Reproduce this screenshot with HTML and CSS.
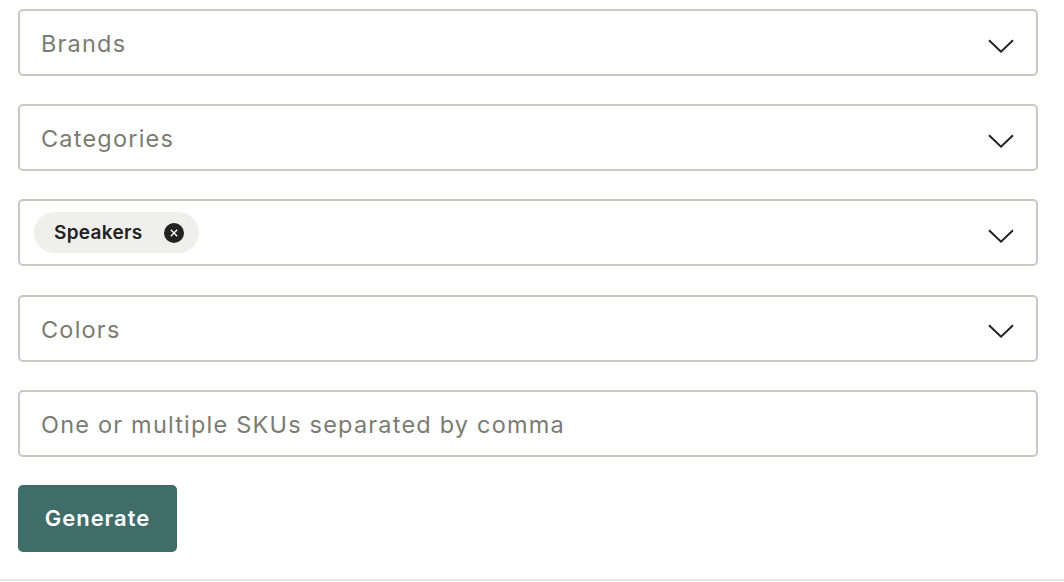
FILE: index.html
```html
<!DOCTYPE html>
<html>
<head>
<meta charset="utf-8">
<link rel="stylesheet" href="styles.css">
</head>
<body>
<form class="filters">
  <div class="field select">
    <span class="placeholder">Brands</span>
    <svg class="chevron" viewBox="0 0 26 14" width="26" height="14"><path d="M1 1.2 L13 12.6 L25 1.2" fill="none" stroke="#222" stroke-width="2"/></svg>
  </div>
  <div class="field select">
    <span class="placeholder">Categories</span>
    <svg class="chevron" viewBox="0 0 26 14" width="26" height="14"><path d="M1 1.2 L13 12.6 L25 1.2" fill="none" stroke="#222" stroke-width="2"/></svg>
  </div>
  <div class="field select chips">
    <span class="chip">Speakers
      <svg class="chip-x" viewBox="0 0 20 20" width="20" height="20"><circle cx="10" cy="10" r="10" fill="#222"/><path d="M6.8 6.8 L13.2 13.2 M13.2 6.8 L6.8 13.2" stroke="#fff" stroke-width="1.3"/></svg>
    </span>
    <svg class="chevron" viewBox="0 0 26 14" width="26" height="14"><path d="M1 1.2 L13 12.6 L25 1.2" fill="none" stroke="#222" stroke-width="2"/></svg>
  </div>
  <div class="field select">
    <span class="placeholder">Colors</span>
    <svg class="chevron" viewBox="0 0 26 14" width="26" height="14"><path d="M1 1.2 L13 12.6 L25 1.2" fill="none" stroke="#222" stroke-width="2"/></svg>
  </div>
  <div class="field">
    <span class="placeholder">One or multiple SKUs separated by comma</span>
  </div>
  <div class="actions">
    <button type="button" class="btn">Generate</button>
  </div>
</form>
</body>
</html>
```
FILE: styles.css
```css
html, body {
  margin: 0;
  padding: 0;
  background: #fff;
}
body {
  font-family: Inter, "Noto Sans", sans-serif;
}
.filters {
  width: 1020px;
  padding: 9px 26px 27px 18px;
  display: flex;
  flex-direction: column;
  gap: 28.2px;
  border-bottom: 2px solid #e6e6e4;
}
.field {
  box-sizing: border-box;
  height: 67px;
  border: 2px solid #c9c9c4;
  border-radius: 5px;
  display: flex;
  align-items: center;
  justify-content: space-between;
  padding: 0 22px 0 21px;
}
.placeholder {
  font-size: 23.5px;
  color: #7b7b73;
  letter-spacing: 1.2px;
  padding-top: 2px;
}
.chevron {
  display: block;
  margin-top: 6px;
}
.chips {
  padding-left: 14px;
}
.chip {
  display: inline-flex;
  align-items: center;
  gap: 21px;
  height: 41px;
  padding: 0 15px 0 20px;
  background: #efefed;
  border-radius: 21px;
  font-size: 19px;
  font-weight: 600;
  letter-spacing: 0.3px;
  color: #222;
}
.chip-x {
  display: block;
}
.actions {
  display: flex;
}
.btn {
  width: 159px;
  height: 67px;
  border: none;
  border-radius: 5px;
  background: #3f6d69;
  color: #fff;
  font-family: Inter, "Noto Sans", sans-serif;
  font-size: 22px;
  font-weight: 600;
  letter-spacing: 0.95px;
  padding: 0;
}
```
